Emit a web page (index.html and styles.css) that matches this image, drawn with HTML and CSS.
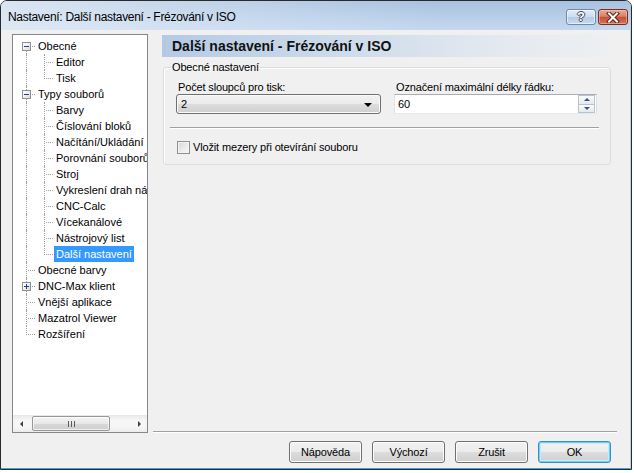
FILE: index.html
```html
<!DOCTYPE html>
<html lang="cs">
<head>
<meta charset="utf-8">
<title>Nastavení</title>
<link rel="stylesheet" href="styles.css">
</head>
<body>
<div class="window">
  <div class="titlebar">
    <span class="title">Nastavení: Další nastavení - Frézování v ISO</span>
    <div class="caption-btns">
      <span class="cbtn help">?</span>
      <span class="cbtn close"><svg width="16" height="11" viewBox="0 0 16 11"><path d="M4 1.5 L12 9.5 M12 1.5 L4 9.5" stroke="#5a2417" stroke-width="4" stroke-linecap="square" fill="none"/><path d="M4 1.5 L12 9.5 M12 1.5 L4 9.5" stroke="#ffffff" stroke-width="2" stroke-linecap="square" fill="none"/></svg></span>
    </div>
  </div>
  <div class="client">
    <div class="tree">
      <div class="tree-scroll">
        <ul class="tree-list">
          <li class="row"><span class="g f"><i class="box minus"></i></span><span class="lbl">Obecné</span></li>
          <li class="row"><span class="g v"></span><span class="g t"></span><span class="lbl">Editor</span></li>
          <li class="row"><span class="g v"></span><span class="g l"></span><span class="lbl">Tisk</span></li>
          <li class="row"><span class="g t"><i class="box minus"></i></span><span class="lbl">Typy souborů</span></li>
          <li class="row"><span class="g v"></span><span class="g t"></span><span class="lbl">Barvy</span></li>
          <li class="row"><span class="g v"></span><span class="g t"></span><span class="lbl">Číslování bloků</span></li>
          <li class="row"><span class="g v"></span><span class="g t"></span><span class="lbl">Načítání/Ukládání</span></li>
          <li class="row"><span class="g v"></span><span class="g t"></span><span class="lbl">Porovnání souborů</span></li>
          <li class="row"><span class="g v"></span><span class="g t"></span><span class="lbl">Stroj</span></li>
          <li class="row"><span class="g v"></span><span class="g t"></span><span class="lbl">Vykreslení drah nástroje</span></li>
          <li class="row"><span class="g v"></span><span class="g t"></span><span class="lbl">CNC-Calc</span></li>
          <li class="row"><span class="g v"></span><span class="g t"></span><span class="lbl">Vícekanálové</span></li>
          <li class="row"><span class="g v"></span><span class="g t"></span><span class="lbl">Nástrojový list</span></li>
          <li class="row"><span class="g v"></span><span class="g l"></span><span class="lbl selected">Další nastavení</span></li>
          <li class="row"><span class="g t"></span><span class="lbl">Obecné barvy</span></li>
          <li class="row"><span class="g t"><i class="box plus"></i></span><span class="lbl">DNC-Max klient</span></li>
          <li class="row"><span class="g t"></span><span class="lbl">Vnější aplikace</span></li>
          <li class="row"><span class="g t"></span><span class="lbl">Mazatrol Viewer</span></li>
          <li class="row"><span class="g l"></span><span class="lbl">Rozšíření</span></li>
        </ul>
      </div>
      <div class="hscroll">
        <span class="sarrow left"></span>
        <div class="track"><span class="thumb"><span class="grip"></span></span></div>
        <span class="sarrow right"></span>
      </div>
    </div>
    <div class="pane">
      <div class="page">
        <div class="page-head">Další nastavení - Frézování v ISO</div>
        <fieldset class="group">
          <legend>Obecné nastavení</legend>
          <div class="group-body">
            <div class="fields">
              <div class="field">
                <span class="flabel">Počet sloupců pro tisk:</span>
                <div class="combo"><span class="combo-val">2</span><span class="combo-arrow"></span></div>
              </div>
              <div class="field">
                <span class="flabel">Označení maximální délky řádku:</span>
                <div class="spin"><span class="spin-val">60</span><span class="spin-btns"><span class="sbtn up"><i></i></span><span class="sbtn down"><i></i></span></span></div>
              </div>
            </div>
            <div class="etched inner"></div>
            <div class="check"><span class="cb"></span><span class="check-text">Vložit mezery při otevírání souboru</span></div>
          </div>
        </fieldset>
      </div>
      <div class="etched bottom"></div>
      <div class="buttons">
        <span class="btn">Nápověda</span>
        <span class="btn">Výchozí</span>
        <span class="btn">Zrušit</span>
        <span class="btn default">OK</span>
      </div>
    </div>
  </div>
</div>
</body>
</html>
```

FILE: styles.css
```css
* { box-sizing: border-box; }

body {
  margin: 0;
  background: #ffffff;
  font-family: "Liberation Sans", Arial, sans-serif;
  font-size: 11px;
  color: #000;
}

.window {
  width: 632px;
  height: 470px;
  border: 1px solid #2a2a2a;
  border-radius: 7px 7px 0 0;
  display: flex;
  flex-direction: column;
  overflow: hidden;
  background: #f0f0f0;
}

/* ---------- title bar ---------- */
.titlebar {
  height: 29px;
  flex: none;
  display: flex;
  align-items: flex-start;
  padding-left: 7px;
  background:
    linear-gradient(to right, rgba(226, 235, 246, 0.85) 0%, rgba(226, 235, 246, 0.35) 40%, rgba(226, 235, 246, 0) 70%),
    linear-gradient(to bottom, #a7c1df 0%, #b7cde7 50%, #c4d8ee 100%);
}

.title {
  font-size: 12px;
  letter-spacing: -0.3px;
  line-height: 14px;
  margin-top: 9px;
  flex: 1;
  color: #000;
}

.caption-btns {
  display: flex;
  gap: 2px;
  margin-top: 8px;
  margin-right: 3px;
}

.cbtn {
  width: 30px;
  height: 16px;
  border-radius: 3px;
  display: flex;
  align-items: center;
  justify-content: center;
}

.help {
  border: 1px solid #6c89b0;
  background: linear-gradient(to bottom, #e3ecf7 0%, #cddcee 48%, #b5cbe5 52%, #c8daee 100%);
  box-shadow: inset 0 0 0 1px rgba(255, 255, 255, 0.55);
  color: #fff;
  font-weight: bold;
  font-size: 13px;
  line-height: 14px;
  text-shadow: 1px 0 0 #3b4a5e, -1px 0 0 #3b4a5e, 0 1px 0 #3b4a5e, 0 -1px 0 #3b4a5e;
}

.close {
  border: 1px solid #7d2f1f;
  background: linear-gradient(to bottom, #e9a996 0%, #d8826b 45%, #c5513a 52%, #d5735a 100%);
  box-shadow: inset 0 0 0 1px rgba(255, 210, 200, 0.45);
}

/* ---------- client ---------- */
.client {
  flex: 1;
  display: flex;
  gap: 5px;
  padding: 4px 0 0 11px;
  border-right: 1px solid #b9d3ec;
  border-bottom: 1px solid #3aa6dc;
}

/* ---------- tree ---------- */
.tree {
  width: 136px;
  height: 399px;
  flex: none;
  border: 1px solid #828790;
  background: #fff;
  display: flex;
  flex-direction: column;
}

.tree-scroll {
  flex: 1;
  overflow: hidden;
}

.tree-list {
  list-style: none;
  margin: 0;
  padding: 3px 0 0 4px;
  width: 220px;
}

.row {
  display: flex;
  height: 16px;
  align-items: center;
  white-space: nowrap;
}

.g {
  position: relative;
  width: 18px;
  height: 16px;
  flex: none;
}

.g::before,
.g::after {
  content: "";
  position: absolute;
}

.g.v::before { left: 9px; top: 0; height: 16px; border-left: 1px dotted #a0a0a0; }
.g.t::before { left: 9px; top: 0; height: 16px; border-left: 1px dotted #a0a0a0; }
.g.l::before { left: 9px; top: 0; height: 9px; border-left: 1px dotted #a0a0a0; }
.g.f::before { left: 9px; top: 8px; height: 8px; border-left: 1px dotted #a0a0a0; }
.g.t::after,
.g.l::after,
.g.f::after { left: 11px; top: 8px; width: 7px; border-top: 1px dotted #a0a0a0; }

.box {
  position: absolute;
  z-index: 1;
  left: 5px;
  top: 4px;
  width: 9px;
  height: 9px;
  border: 1px solid #919191;
  background: linear-gradient(135deg, #ffffff 0%, #f0f0f0 50%, #d5d5d5 100%);
}

.box::before,
.box::after {
  content: "";
  position: absolute;
  background: #1c3f95;
}

.box::before { left: 1px; top: 3px; width: 5px; height: 1px; }
.box.plus::after { left: 3px; top: 1px; width: 1px; height: 5px; }

.lbl {
  margin-left: 1px;
  padding: 0 2px;
  line-height: 16px;
  height: 16px;
}

.lbl.selected {
  background: #3399ff;
  color: #fff;
}

/* horizontal scrollbar */
.hscroll {
  height: 17px;
  flex: none;
  display: flex;
  align-items: stretch;
  background: linear-gradient(to bottom, #e8e8e8 0%, #f6f6f6 30%, #f6f6f6 70%, #ececec 100%);
}

.sarrow {
  width: 17px;
  flex: none;
  position: relative;
}

.sarrow::before {
  content: "";
  position: absolute;
  top: 6px;
  border-top: 3px solid transparent;
  border-bottom: 3px solid transparent;
}

.sarrow.left::before { left: 7px; border-right: 3px solid #404040; }
.sarrow.right::before { left: 8px; border-left: 3px solid #404040; }

.track {
  flex: 1;
  padding: 1px 0 1px 2px;
  display: flex;
}

.thumb {
  width: 78px;
  border: 1px solid #979797;
  border-radius: 2px;
  background: linear-gradient(to bottom, #f4f4f4 0%, #e8e8e8 50%, #d9d9d9 51%, #cfcfcf 100%);
  box-shadow: inset 0 0 0 1px rgba(255, 255, 255, 0.7);
  display: flex;
  align-items: center;
  justify-content: center;
}

.grip {
  width: 7px;
  height: 6px;
  background: linear-gradient(to right, #5a5a5a 0 1px, transparent 1px 3px, #5a5a5a 3px 4px, transparent 4px 6px, #5a5a5a 6px 7px);
}

/* ---------- right pane ---------- */
.pane {
  width: 464px;
  flex: none;
  display: flex;
  flex-direction: column;
}

.page {
  height: 397px;
  flex: none;
  padding: 1px 5px 0 9px;
}

.page-head {
  height: 22px;
  line-height: 22px;
  padding-left: 10px;
  font-weight: bold;
  font-size: 14px;
  color: #111;
  background: linear-gradient(to right, #b4cae3 0%, #cddbeb 40%, #e4e9f0 75%, #eef0f2 100%);
}

.group {
  margin: 4px 1px 0;
  padding: 0;
  border: 1px solid #d5dfe5;
  border-radius: 3px;
  box-shadow: inset 1px 1px 0 #fff;
  min-width: 0;
}

.group legend {
  margin-left: 7px;
  padding: 0 1px;
  line-height: 13px;
  letter-spacing: -0.15px;
}

.group-body {
  padding: 7px 13px 10px 12px;
}

.fields {
  display: grid;
  grid-template-columns: 205px 1fr;
  column-gap: 13px;
}

.field {
  display: flex;
  flex-direction: column;
}

.flabel {
  padding-left: 2px;
  line-height: 13px;
  letter-spacing: -0.15px;
}

.combo {
  height: 20px;
  border: 1px solid #707070;
  border-radius: 3px;
  background: linear-gradient(to bottom, #f2f2f2 0%, #ebebeb 50%, #dddddd 51%, #cfcfcf 100%);
  box-shadow: inset 0 0 0 1px #fbfbfb;
  display: flex;
  align-items: center;
  padding: 0 8px 0 4px;
}

.combo-val {
  flex: 1;
  line-height: 14px;
}

.combo-arrow {
  width: 0;
  height: 0;
  border-left: 4px solid transparent;
  border-right: 4px solid transparent;
  border-top: 4px solid #000;
  margin-top: 1px;
}

.spin {
  height: 20px;
  border: 1px solid;
  border-color: #abadb3 #dbdfe6 #e3e9ef #e2e3ea;
  background: #fff;
  display: flex;
  align-items: center;
  padding-left: 3px;
}

.spin-val {
  flex: 1;
  line-height: 14px;
}

.spin-btns {
  width: 17px;
  height: 18px;
  display: flex;
  flex-direction: column;
  margin-right: 1px;
}

.sbtn {
  flex: 1;
  border: 1px solid #b9c2cf;
  background: linear-gradient(to bottom, #fbfbfb, #e6e9ee);
  display: flex;
  align-items: center;
  justify-content: center;
}

.sbtn + .sbtn { border-top: none; }

.sbtn i {
  width: 0;
  height: 0;
  border-left: 3px solid transparent;
  border-right: 3px solid transparent;
}

.sbtn.up i { border-bottom: 3px solid #35528a; }
.sbtn.down i { border-top: 3px solid #35528a; }

.etched {
  height: 2px;
  border-top: 1px solid #a0a0a0;
  border-bottom: 1px solid #ffffff;
}

.etched.inner {
  margin: 13px -2px 0 -6px;
}

.check {
  display: flex;
  align-items: center;
  margin-top: 12px;
  height: 13px;
}

.cb {
  width: 13px;
  height: 13px;
  margin-left: 1px;
  border: 1px solid #8e8f8f;
  background: linear-gradient(135deg, #d2d4d6 0%, #e8e9ea 50%, #f8f8f8 100%);
  box-shadow: inset 0 0 0 1px #f4f4f4;
  flex: none;
}

.check-text {
  margin-left: 3px;
  line-height: 13px;
  letter-spacing: -0.15px;
}

.etched.bottom {
  flex: none;
}

.buttons {
  display: flex;
  justify-content: flex-end;
  gap: 10px;
  margin-top: 8px;
  padding-right: 6px;
}

.btn {
  width: 73px;
  height: 22px;
  border: 1px solid #707070;
  border-radius: 3px;
  background: linear-gradient(to bottom, #f2f2f2 0%, #ebebeb 50%, #dddddd 51%, #cfcfcf 100%);
  box-shadow: inset 0 0 0 1px #fcfcfc;
  display: flex;
  align-items: center;
  justify-content: center;
  letter-spacing: -0.15px;
}

.btn.default {
  border-color: #3c8fc6;
  box-shadow: inset 0 0 0 1px #6fd0f6, inset 0 0 0 2px #c4ecfb;
}
```
